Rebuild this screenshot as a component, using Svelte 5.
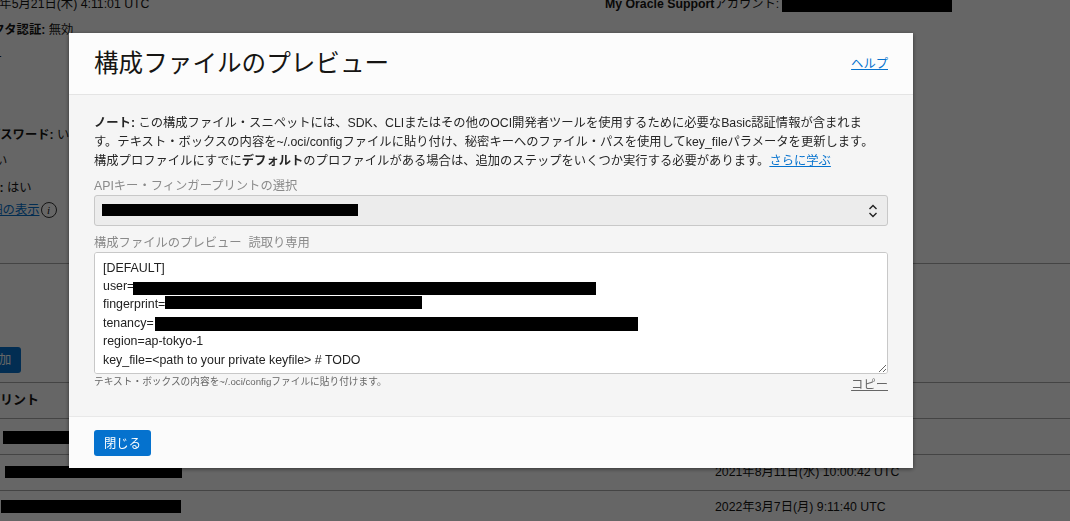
<script>
  const rows = [
    { bar: 'b1', date: '' },
    { bar: 'b2', date: '2021年8月11日(水) 10:00:42 UTC' },
    { bar: 'b3', date: '2022年3月7日(月) 9:11:40 UTC' }
  ];
</script>

<div class="page">
  <section class="details">
    <div class="col left">
      <p class="l1">2020年5月21日(木) 4:11:01 UTC</p>
      <p class="l2"><b>マルチファクタ認証:</b> 無効</p>
      <p class="l3">ー</p>
      <p class="l4"><b>パスワード:</b> いいえ</p>
      <p class="l5">い</p>
      <p class="l6"><b>API:</b> はい</p>
      <p class="l7"><a href="#more">詳細の表示</a><span class="info">i</span></p>
    </div>
    <div class="col right">
      <p class="mos"><b>My Oracle Support</b>アカウント:<span class="mosbar"></span></p>
    </div>
  </section>

  <section class="keys">
    <div class="addbar"><span class="add">追加</span></div>
    <div class="thead"><b>フィンガープリント</b></div>
    {#each rows as r}
      <div class="trow">
        <span class="bar {r.bar}"></span>
        <span class="date">{r.date}</span>
      </div>
    {/each}
  </section>
</div>

<div class="overlay"></div>

<div class="modal" role="dialog">
  <header>
    <h1>構成ファイルのプレビュー</h1>
    <a class="help" href="#help">ヘルプ</a>
  </header>
  <div class="body">
    <p class="note"><b>ノート:</b> この構成ファイル・スニペットには、SDK、CLIまたはその他のOCI開発者ツールを使用するために必要なBasic認証情報が含まれま<br>す。テキスト・ボックスの内容を~/.oci/configファイルに貼り付け、秘密キーへのファイル・パスを使用してkey_fileパラメータを更新します。<br>構成プロファイルにすでに<b>デフォルト</b>のプロファイルがある場合は、追加のステップをいくつか実行する必要があります。<a href="#learn">さらに学ぶ</a></p>
    <div class="label first">APIキー・フィンガープリントの選択</div>
    <div class="select">
      <span class="selbar"></span>
      <svg width="10" height="16" viewBox="0 0 10 16" fill="none" stroke="#222" stroke-width="1.4"><path d="M1.5 6 5 2.5 8.5 6M1.5 10 5 13.5 8.5 10"/></svg>
    </div>
    <div class="label second">構成ファイルのプレビュー&nbsp;&nbsp;読取り専用</div>
    <div class="area">
      <div>[DEFAULT]</div>
      <div>user=<span class="red r-user"></span></div>
      <div>fingerprint=<span class="red r-fp"></span></div>
      <div>tenancy=<span class="red r-ten"></span></div>
      <div>region=ap-tokyo-1</div>
      <div>key_file=&lt;path to your private keyfile&gt; # TODO</div>
    </div>
    <div class="under">
      <span class="hint">テキスト・ボックスの内容を~/.oci/configファイルに貼り付けます。</span>
      <a class="copy" href="#copy">コピー</a>
    </div>
  </div>
  <footer><button>閉じる</button></footer>
</div>

<style>
  :global(body) {
    margin: 0;
    height: 521px;
    overflow: hidden;
    background: #fff;
    font-family: "Liberation Sans", "Noto Sans CJK JP", sans-serif;
    font-size: 12.3px;
    color: #161513;
  }
  p { margin: 0; }
  .page { width: 1070px; height: 521px; overflow: hidden; }

  .details {
    display: flex;
    height: 268px;
    margin-top: -5px;
    border-bottom: 1px solid #aaa;
  }
  .col.left { width: 605px; overflow: hidden; flex: none; }
  .col.left p { white-space: nowrap; line-height: 18px; height: 18px; }
  .l1 { margin-left: -28px; }
  .l2 { margin-top: 8px; margin-left: -69px; }
  .l3 { margin-top: 10px; margin-left: -10px; }
  .l4 { margin-top: 59px; margin-left: -12px; }
  .l5 { margin-top: 8px; margin-left: -5px; }
  .l6 { margin-top: 9px; margin-left: -21px; }
  .l7 { margin-top: 4px; margin-left: -22px; display: flex; align-items: center; }
  .l7 a { color: #0572ce; text-decoration: underline; }
  .info {
    width: 14px; height: 14px; border: 1px solid #333; border-radius: 50%;
    font: italic 11px/14px "Liberation Serif", serif; text-align: center; margin-left: 1px;
  }
  .mos { white-space: nowrap; line-height: 18px; display: flex; align-items: flex-start; height: 17px; }
  .mosbar { width: 170px; height: 17px; background: #000; display: block; flex: none; margin-left: 3px; }

  .keys { padding-top: 83px; }
  .addbar { height: 35px; border-bottom: 1px solid #aaa; overflow: hidden; }
  .add {
    display: block; margin-left: -23px; width: 44px; height: 26px; line-height: 26px;
    text-align: center; background: #0572ce; color: #fff; border-radius: 3px;
  }
  .thead { height: 35px; line-height: 33px; border-bottom: 1px solid #aaa; overflow: hidden; white-space: nowrap; text-indent: -77px; font-size: 13px; }
  .trow { height: 35px; border-bottom: 1px solid #aaa; position: relative; display: flex; align-items: center; }
  .date { position: absolute; left: 715px; top: 8px; white-space: nowrap; line-height: 18px; }
  .trow:last-child .date { top: 7px; }
  .bar { display: block; background: #000; height: 12px; }
  .b1 { margin-left: 3px; width: 66px; height: 13px; margin-top: 2px; }
  .b2 { margin-left: 5px; width: 177px; margin-bottom: 2px; }
  .b3 { margin-left: 1px; width: 180px; height: 13px; margin-bottom: 4px; }

  .overlay { position: fixed; inset: 0; background: rgba(0, 0, 0, 0.6); }

  .modal {
    position: fixed; left: 69px; top: 33px; width: 844px; height: 435px;
    box-sizing: border-box; display: flex; flex-direction: column;
    background: #f5f5f5; border-radius: 2px;
    box-shadow: 0 1px 4px rgba(0, 0, 0, 0.5);
  }
  header {
    height: 62px; flex: none; box-sizing: border-box; display: flex;
    justify-content: space-between; align-items: center;
    padding: 0 25px; background: #fcfcfc; border-bottom: 1px solid #e4e4e4;
  }
  h1 { margin: 1px 0 0; font-weight: 400; font-size: 24.6px; color: #161513; line-height: 30px; }
  .help, .note a { color: #0572ce; text-decoration: underline; }
  .help { margin-bottom: 1px; }

  .body { flex: 1; padding: 19px 25px 0; }
  .note { line-height: 19px; color: #262626; white-space: nowrap; }
  .label { color: #8a8a8a; line-height: 16px; }
  .label.first { margin-top: 7px; }
  .label.second { margin-top: 9px; }
  .select {
    margin-top: 1px; height: 31px; box-sizing: border-box; border: 1px solid #c8c8c8; border-radius: 3px;
    background: #ececec; display: flex; align-items: center; justify-content: space-between; padding: 0 9px 0 7px;
  }
  .selbar { width: 256px; height: 12px; background: #000; margin-top: -1px; }
  .area {
    margin-top: 1px; width: 794px; height: 122px; box-sizing: border-box;
    background: #fff; border: 1px solid #c8c8c8; border-radius: 3px;
    padding: 5.5px 8px; line-height: 18.4px; color: #222; font-size: 12.4px;
    resize: both; overflow: auto; white-space: nowrap;
  }
  .red { display: inline-block; background: #000; height: 13px; vertical-align: -2px; position: relative; }
  .r-user { width: 463px; margin-left: -1px; top: 3px; }
  .r-fp { width: 257px; vertical-align: -1px; }
  .r-ten { width: 483px; margin-left: 1px; vertical-align: -3px; height: 14px; top: 1px; }
  .under { display: flex; justify-content: space-between; align-items: flex-start; margin-top: 1px; }
  .hint { font-size: 9.7px; color: #666; line-height: 14px; }
  .copy { color: #666; text-decoration: underline; line-height: 18px; margin-top: 1px; }

  footer {
    height: 52px; flex: none; box-sizing: border-box; background: #fbfbfb; border-top: 1px solid #e8e8e8;
    padding: 13px 25px 0;
  }
  button {
    width: 57px; height: 26px; border: 0; border-radius: 3px; background: #0572ce; color: #fff;
    font: 12.3px "Liberation Sans", "Noto Sans CJK JP", sans-serif; padding: 0;
  }
</style>
